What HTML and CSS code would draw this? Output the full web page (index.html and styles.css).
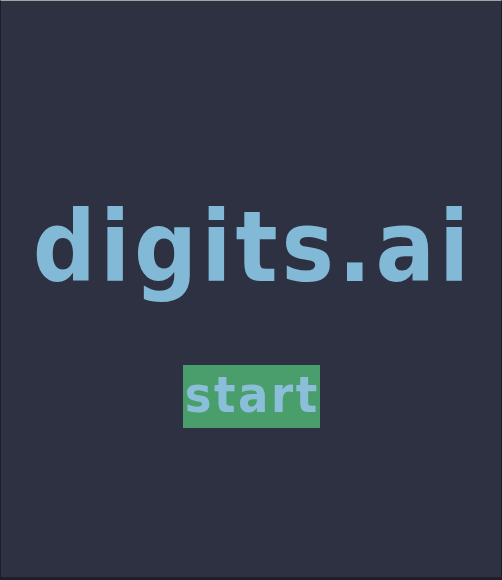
FILE: index.html
```html
<!DOCTYPE html>
<html>
<head>
<meta charset="utf-8">
<link rel="stylesheet" href="styles.css">
</head>
<body>
<div class="window">
  <h1 class="title">digits.ai</h1>
  <div class="start-btn">start</div>
</div>
</body>
</html>
```
FILE: styles.css
```css
html, body {
  margin: 0;
  padding: 0;
  background: #1c1d25;
}
.window {
  box-sizing: border-box;
  width: 502px;
  height: 580px;
  background: #2e3142;
  border-top: 1px solid #a3a3a3;
  border-left: 1px solid #1d1e26;
  border-right: 1px solid #1d1e26;
  border-bottom: 3px solid #1d1e26;
  display: flex;
  flex-direction: column;
  align-items: center;
}
.title {
  margin: 191px 0 0 0;
  font-family: "DejaVu Sans Condensed", "DejaVu Sans", sans-serif;
  font-stretch: condensed;
  font-weight: bold;
  font-size: 98px;
  line-height: 110px;
  color: #82b9d6;
  letter-spacing: 4px;
  padding-left: 4px;
}
.start-btn {
  margin-top: 63px;
  width: 137px;
  height: 63px;
  background: #4a9e6b;
  color: #8bbfd9;
  font-family: "DejaVu Sans Condensed", "DejaVu Sans", sans-serif;
  font-stretch: condensed;
  font-weight: bold;
  font-size: 50px;
  letter-spacing: 2.5px;
  padding: 0 0 3px 2.5px;
  box-sizing: border-box;
  display: flex;
  align-items: center;
  justify-content: center;
  line-height: 1;
}
```
